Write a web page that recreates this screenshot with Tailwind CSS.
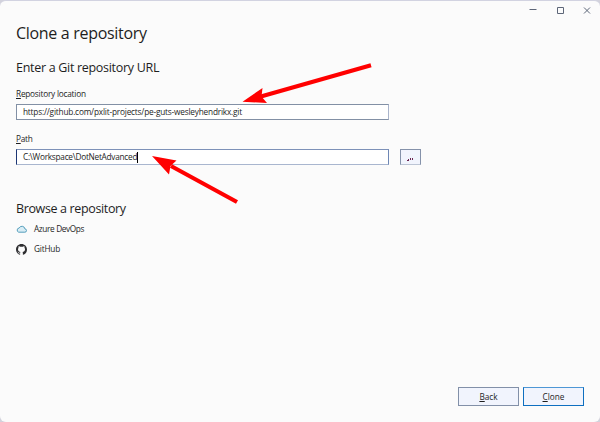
<!DOCTYPE html>
<html lang="en">
<head>
<meta charset="utf-8">
<title>Clone a repository</title>
<script src="https://cdn.jsdelivr.net/npm/@tailwindcss/browser@4"></script>
</head>
<body class="w-[600px] h-[422px] overflow-hidden bg-[#d2d2dc]">
<div class="relative flex flex-col w-[600px] h-[422px] rounded-[6px] border-t border-[#d2d3e1] bg-[#fbfbfb] font-['Open_Sans','Noto_Sans',sans-serif] text-[#1e1e1e] whitespace-nowrap">
  <header class="flex justify-end items-center h-[18px] pr-[9px] gap-[19px] shrink-0 text-[#5d6678]">
    <svg class="w-2 h-2" viewBox="0 0 8 8" fill="none" stroke="currentColor"><path d="M.5 3.500h7"/></svg>
    <svg class="w-2 h-2" viewBox="0 0 8 8" fill="none" stroke="currentColor"><path d="M1.500 1.500h6v6h-6z"/></svg>
    <svg class="w-2 h-2" viewBox="0 0 8 8" fill="none" stroke="currentColor"><path d="M1 1.500l6 6M7 1.500l-6 6"/></svg>
  </header>
  <main class="flex flex-col px-4">
    <h1 class="h-[26px] leading-[26px] text-[16px] mt-[1px] tracking-[-0.31px]">Clone a repository</h1>
    <h2 class="h-[20px] leading-[20px] mt-[12px] text-[12.500px] tracking-[-0.3px]">Enter a Git repository URL</h2>
    <label class="h-[14px] leading-[14px] mt-[9px] text-[8.250px] tracking-[-0.22px]"><span class="underline underline-offset-1">R</span>epository location</label>
    <div class="flex items-center w-[373px] h-[16px] mt-[3px] pl-[6px] border border-[#8290a5] border-r-[#aab4cb] bg-white text-[8.250px] tracking-[-0.19px]">https://github.com/pxlit-projects/pe-guts-wesleyhendrikx.git</div>
    <label class="h-[14px] leading-[14px] mt-[12px] text-[8.250px] tracking-[-0.22px]"><span class="underline underline-offset-1">P</span>ath</label>
    <div class="flex mt-[3px] gap-[11px]">
      <div class="flex items-center w-[373px] h-[16px] pl-[6px] border border-t-[#7d91b8] border-r-[#6e87b5] border-b-[#a9b6cf] border-l-[#1c3674] bg-white text-[8.250px] tracking-[-0.26px]"><span>C:\Workspace\DotNetAdvanced</span><span class="w-px h-[11px] bg-black"></span></div>
      <button class="flex justify-center items-center w-[21px] h-[16px] border border-[#8592aa] border-b-[#bcc5d5] bg-[#f1f4fd]"><svg class="w-[7px] h-[4px] mt-[5px]" viewBox="0 0 7 4"><path d="M1 1h1v2H0V2h1zM3 0h1v2H3zM5 0h1v2H5z" fill="#6b2550"/></svg></button>
    </div>
    <h2 class="h-[20px] leading-[20px] mt-[34px] text-[12.500px] tracking-[-0.36px]">Browse a repository</h2>
    <div class="flex items-center h-[20px] gap-[7px] text-[8.250px] tracking-[-0.36px]">
      <svg class="w-[11px] h-[10px]" viewBox="0 0 11 10"><path d="M2.700 8.200h6.100a1.650 1.650 0 0 0 .1-3.300 3 3 0 0 0-5.700-.9A2.150 2.150 0 0 0 2.700 8.200z" fill="#d9edf5" stroke="#4595b5" stroke-width=".9"/></svg>
      <span>Azure DevOps</span>
    </div>
    <div class="flex items-center h-[20px] gap-[7px] text-[8.250px] tracking-[-0.2px]">
      <svg class="w-[11px] h-[11px]" viewBox="0 0 16 16" fill="#2e2e31"><path d="M8 0C3.580 0 0 3.580 0 8c0 3.540 2.290 6.530 5.470 7.590.4.070.55-.17.55-.38 0-.19-.01-.82-.01-1.490-2.010.37-2.530-.49-2.690-.94-.09-.23-.48-.94-.82-1.130-.28-.15-.68-.52-.01-.53.63-.01 1.080.58 1.230.82.72 1.210 1.870.87 2.330.66.070-.52.28-.87.51-1.070-1.780-.2-3.640-.89-3.640-3.950 0-.87.31-1.590.82-2.150-.08-.2-.36-1.020.08-2.120 0 0 .67-.21 2.200.82.64-.18 1.320-.27 2-.27s1.360.09 2 .27c1.530-1.040 2.200-.82 2.200-.82.44 1.100.16 1.920.08 2.120.51.56.82 1.270.82 2.150 0 3.070-1.870 3.750-3.650 3.950.29.25.54.73.54 1.480 0 1.070-.01 1.930-.01 2.200 0 .21.15.46.55.38A8.010 8.010 0 0 0 16 8c0-4.420-3.580-8-8-8z"/></svg>
      <span>GitHub</span>
    </div>
  </main>
  <footer class="flex justify-end gap-[4px] mt-auto mb-[16px] pr-4 text-[8.250px]">
    <button class="w-[61px] h-[19px] leading-[16px] border border-[#8290a8] bg-[#f1f4fd]"><span class="underline underline-offset-1">B</span>ack</button>
    <button class="w-[61px] h-[19px] leading-[16px] border border-[#0e6fc0] border-t-[#4e97d5] bg-[#f1f4fd]"><span class="underline underline-offset-1">C</span>lone</button>
  </footer>
  <svg class="absolute left-0 -top-px w-[600px] h-[422px] pointer-events-none" viewBox="0 0 600 422" fill="#f00" stroke="#f00">
    <path d="M371 65.200L260 96.700M237 202L171 166" stroke-width="4.200" fill="none"/>
    <path d="M242.500 101.800L262.500 88L261.500 96.500L267 103zM152 156L176.500 160.500L170.500 166L169 174.500z" stroke="none"/>
  </svg>
</div>
</body>
</html>
